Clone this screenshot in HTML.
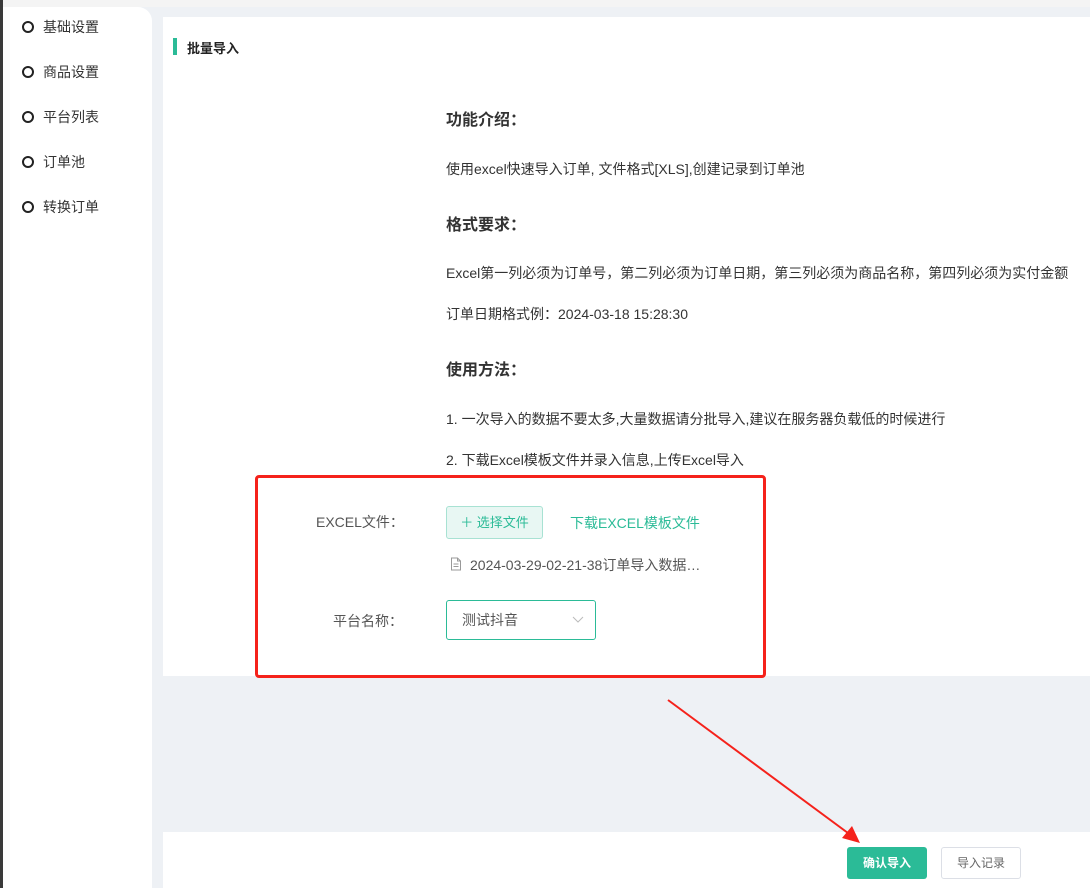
<!DOCTYPE html>
<html><head><meta charset="utf-8"><style>
*{margin:0;padding:0;box-sizing:border-box}
body{width:1090px;height:888px;overflow:hidden;background:#eef1f5;font-family:"Liberation Sans","Noto Sans CJK SC",sans-serif;color:#333;position:relative}
.abs{position:absolute}
.top{left:0;top:0;width:1090px;height:7px;background:#f4f4f4}
.dark{left:0;top:0;width:3px;height:888px;background:#3a3a3a}
.side{left:3px;top:7px;width:149px;height:881px;background:#fff;border-top-right-radius:14px}
.menu{left:22px;font-size:14px;color:#333;display:flex;align-items:center}
.menu i{display:inline-block;width:12px;height:12px;border:2px solid #222;border-radius:50%;margin-right:9px}
.card{left:163px;top:17px;width:927px;height:659px;background:#fff}
.bar{left:173px;top:38px;width:4px;height:17px;background:#2bbb97}
.title{left:187px;top:38px;font-size:13px;font-weight:bold;color:#222}
h3{position:absolute;left:446px;font-size:16px;font-weight:bold;color:#333}
.p{position:absolute;left:446px;font-size:14px;color:#333;white-space:nowrap}
.red{left:255px;top:475px;width:511px;height:203px;border:3px solid #f5221b;border-radius:4px}
.lbl{font-size:14px;color:#555}
.btn1{left:446px;top:506px;width:97px;height:33px;background:#e8f7f3;border:1px solid #a8e2d3;border-radius:3px;color:#2bbb97;font-size:13px;text-align:center;line-height:31px}
.sel{left:446px;top:600px;width:150px;height:40px;border:1px solid #2bbb97;border-radius:3px;font-size:14px;color:#555;padding-left:15px;line-height:38px}
.foot{left:163px;top:832px;width:927px;height:56px;background:#fff}
.ok{left:847px;top:847px;width:80px;height:32px;background:#2bbb97;border-radius:3px;color:#fff;font-size:12px;font-weight:bold;text-align:center;line-height:32px}
.rec{left:941px;top:847px;width:80px;height:32px;border:1px solid #dcdfe6;border-radius:3px;color:#666;font-size:12px;text-align:center;line-height:30px}
</style></head><body>
<div class="abs top"></div>
<div class="abs side"></div>
<div class="abs dark"></div>
<div class="abs menu" style="top:17px"><i></i>基础设置</div>
<div class="abs menu" style="top:62px"><i></i>商品设置</div>
<div class="abs menu" style="top:107px"><i></i>平台列表</div>
<div class="abs menu" style="top:152px"><i></i>订单池</div>
<div class="abs menu" style="top:197px"><i></i>转换订单</div>
<div class="abs card"></div>
<div class="abs bar"></div>
<div class="abs title">批量导入</div>
<h3 style="top:106px">功能介绍：</h3>
<div class="p" style="top:159px">使用excel快速导入订单, 文件格式[XLS],创建记录到订单池</div>
<h3 style="top:211px">格式要求：</h3>
<div class="p" style="top:263px">Excel第一列必须为订单号，第二列必须为订单日期，第三列必须为商品名称，第四列必须为实付金额</div>
<div class="p" style="top:304px">订单日期格式例：2024-03-18 15:28:30</div>
<h3 style="top:356px">使用方法：</h3>
<div class="p" style="top:409px">1. 一次导入的数据不要太多,大量数据请分批导入,建议在服务器负载低的时候进行</div>
<div class="p" style="top:450px">2. 下载Excel模板文件并录入信息,上传Excel导入</div>
<div class="abs lbl" style="left:316px;top:512px">EXCEL文件：</div>
<div class="abs btn1">＋ 选择文件</div>
<div class="abs" style="left:570px;top:513px;font-size:14px;color:#2bbb97">下载EXCEL模板文件</div>
<svg class="abs" style="left:450px;top:557px" width="12" height="14" viewBox="0 0 12 14"><path d="M1.5 1h6l3 3v9h-9z M7.5 1v3h3 M3.5 7h5 M3.5 9.5h5" fill="none" stroke="#999" stroke-width="1"/></svg>
<div class="abs" style="left:470px;top:555px;font-size:14px;color:#555">2024-03-29-02-21-38订单导入数据…</div>
<div class="abs lbl" style="left:333px;top:611px">平台名称：</div>
<div class="abs sel">测试抖音</div>
<svg class="abs" style="left:572px;top:616px" width="12" height="8" viewBox="0 0 12 8"><path d="M1 1l5 5 5-5" fill="none" stroke="#bbb" stroke-width="1"/></svg>
<div class="abs red"></div>
<div class="abs foot"></div>
<div class="abs ok">确认导入</div>
<div class="abs rec">导入记录</div>
<svg class="abs" style="left:0;top:0" width="1090" height="888"><line x1="668" y1="700" x2="852" y2="836" stroke="#f5221b" stroke-width="2"/><polygon points="860,843 842,838 852,826" fill="#f5221b"/></svg>
</body></html>
